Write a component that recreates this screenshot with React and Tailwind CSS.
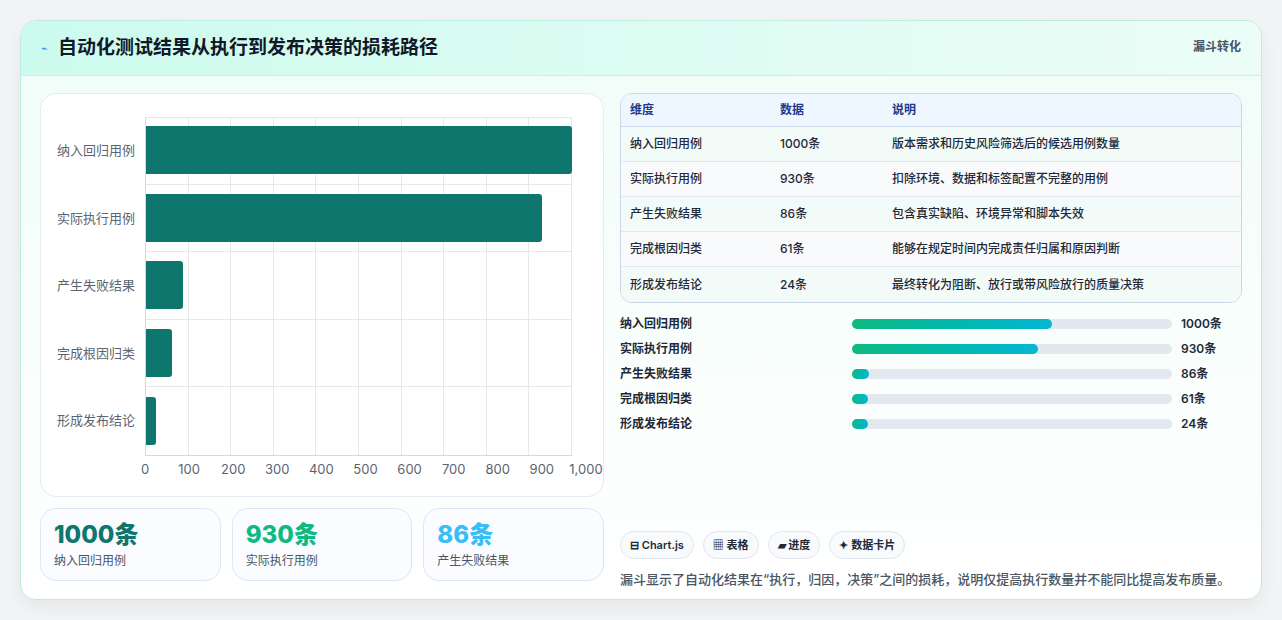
const rows = [
  { name: '纳入回归用例', v: 1000, note: '版本需求和历史风险筛选后的候选用例数量' },
  { name: '实际执行用例', v: 930, note: '扣除环境、数据和标签配置不完整的用例' },
  { name: '产生失败结果', v: 86, note: '包含真实缺陷、环境异常和脚本失效' },
  { name: '完成根因归类', v: 61, note: '能够在规定时间内完成责任归属和原因判断' },
  { name: '形成发布结论', v: 24, note: '最终转化为阻断、放行或带风险放行的质量决策' },
];
const ticks = ['0', '100', '200', '300', '400', '500', '600', '700', '800', '900', '1,000'];
const font = { fontFamily: 'Inter, "Noto Sans CJK SC", sans-serif' };

const BarChart = () => (
  <div className="h-[404px] bg-white border border-[#e3ecef] rounded-2xl pt-[23px] pr-[31px] pl-[14px]">
    <div className="flex">
      <div className="w-[90px] flex flex-col pr-[10px]">
        {rows.map((r) => (
          <div key={r.name} className="h-[67.6px] flex items-center justify-end text-[13px] text-[#5b6472]">{r.name}</div>
        ))}
      </div>
      <div className="flex-1 relative border-l border-[#d5d9df] border-b">
        <div className="absolute inset-0 grid grid-cols-10">
          {ticks.slice(1).map((t) => (
            <div key={t} className="border-r border-t border-[#e5e7eb]" />
          ))}
        </div>
        {rows.map((r) => (
          <div key={r.name} className="relative h-[67.6px] flex items-center border-b border-[#e5e7eb] last:border-b-0">
            <div className="h-[48px] bg-[#0f766e] rounded-r-[3px]" style={{ width: `${r.v / 10}%` }} />
          </div>
        ))}
      </div>
    </div>
    <div className="flex ml-[90px] mt-[4px] justify-between text-[13px] text-[#5b6472] -mr-[14px] -ml-[-84px]">
      {ticks.map((t) => (
        <span key={t} className="w-0 flex justify-center">{t}</span>
      ))}
    </div>
  </div>
);

export default function App() {
  return (
    <div className="min-h-screen bg-[#f3f4f6] pt-[20px] px-[20px]" style={font}>
      <div className="h-[580px] rounded-2xl border border-[#bfece0] bg-gradient-to-b from-[#f0fdf8] to-white overflow-hidden shadow-[0_8px_20px_rgba(0,0,0,0.06)]">
        <div className="h-[55px] flex items-center justify-between px-[20px] bg-gradient-to-r from-[#ccfbee] to-[#ecfdf7] border-b border-[#c9f0e4]">
          <div className="flex items-center gap-[10px]">
            <span className="text-[#3b82f6] text-[11px]">⌁</span>
            <h1 className="text-[19px] font-bold text-[#111827]">自动化测试结果从执行到发布决策的损耗路径</h1>
          </div>
          <span className="text-[12px] font-semibold text-[#475569] self-start mt-[17px]">漏斗转化</span>
        </div>
        <div className="flex gap-[16px] px-[19px] pt-[17px]">
          <div className="w-[564px] flex flex-col gap-[11px]">
            <BarChart />
            <div className="grid grid-cols-3 gap-[11px]">
              {[
                ['1000条', '纳入回归用例', 'text-[#0f766e]'],
                ['930条', '实际执行用例', 'text-[#10b981]'],
                ['86条', '产生失败结果', 'text-[#38bdf8]'],
              ].map(([v, l, c]) => (
                <div key={l} className="h-[73px] rounded-2xl border border-[#dbe7f3] bg-[#fafcff] px-[13px] pt-[10px]">
                  <div className={`text-[24px] font-extrabold leading-[32px] ${c}`}>{v}</div>
                  <div className="text-[12px] text-[#4b5563] mt-[1px]">{l}</div>
                </div>
              ))}
            </div>
          </div>
          <div className="flex-1 flex flex-col">
            <div className="rounded-xl border border-[#c9d6e8] overflow-hidden bg-white">
              <div className="flex h-[33px] items-center bg-[#eef6ff] border-b border-[#c9d6e8] text-[12px] font-semibold text-[#1e3a8a] px-[9px]">
                <span className="w-[150px]">维度</span><span className="w-[112px]">数据</span><span>说明</span>
              </div>
              {rows.map((r, i) => (
                <div key={r.name} className={`flex h-[35px] items-center px-[9px] text-[12px] font-medium text-[#1f2937] border-b border-[#e2e8f0] last:border-b-0 ${i % 2 ? 'bg-[#f8fafc]' : 'bg-[#f3fbf8]'}`}>
                  <span className="w-[150px]">{r.name}</span><span className="w-[112px]">{r.v}条</span><span>{r.note}</span>
                </div>
              ))}
            </div>
            <div className="flex flex-col gap-[7px] mt-[12px]">
              {rows.map((r) => (
                <div key={r.name} className="flex items-center h-[18px] text-[12px] font-semibold text-[#1f2937]">
                  <span className="w-[232px]">{r.name}</span>
                  <div className="w-[320px] h-[10px] rounded-full bg-[#e2e8f0]">
                    <div className="h-full rounded-full bg-gradient-to-r from-[#10b981] to-[#06b6d4] min-w-[16px]" style={{ width: `${r.v * 0.0625}%` }} />
                  </div>
                  <span className="ml-[9px]">{r.v}条</span>
                </div>
              ))}
            </div>
            <div className="flex gap-[9px] mt-[98px]">
              {['⊟ Chart.js', '▦ 表格', '▰ 进度', '✦ 数据卡片'].map((t) => (
                <span key={t} className="h-[28px] px-[9px] flex items-center rounded-full border border-[#e2e8f0] bg-[#f8fafc] text-[11px] font-semibold text-[#1f2937]">{t}</span>
              ))}
            </div>
            <p className="mt-[11px] text-[13px] font-medium text-[#4b5563]">漏斗显示了自动化结果在“执行，归因，决策”之间的损耗，说明仅提高执行数量并不能同比提高发布质量。</p>
          </div>
        </div>
      </div>
    </div>
  );
}
